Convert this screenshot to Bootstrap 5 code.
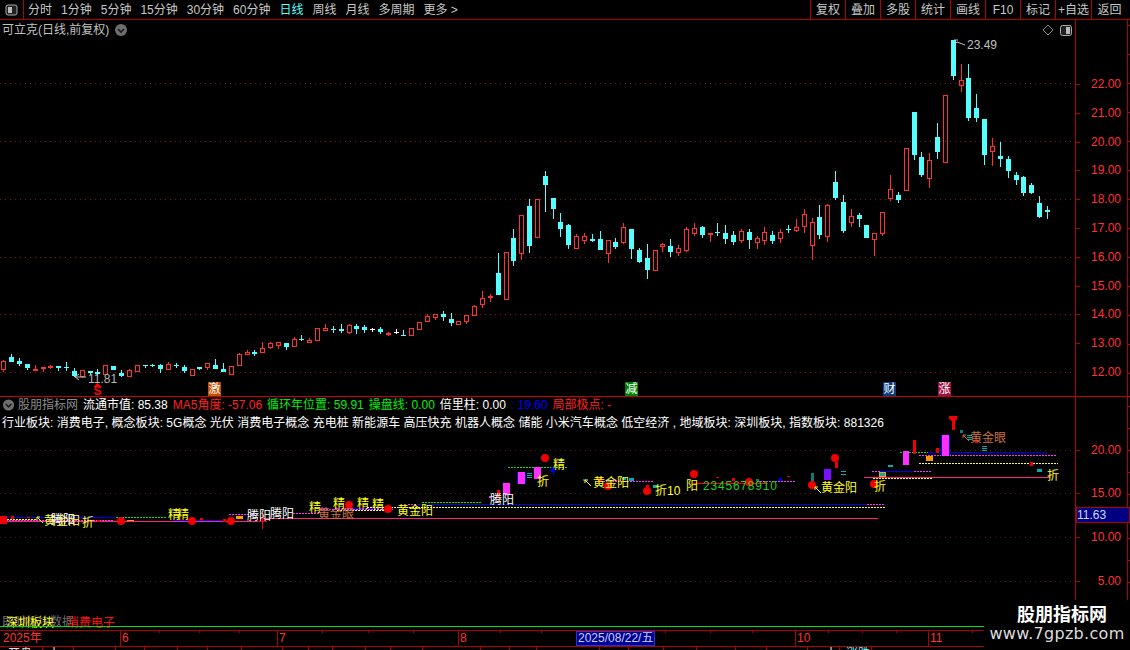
<!doctype html>
<html lang="zh-CN">
<head>
<meta charset="utf-8">
<title>可立克 K线</title>
<link href="https://cdn.jsdelivr.net/npm/bootstrap@5.3.0/dist/css/bootstrap.min.css" rel="stylesheet">
<style>
html,body{margin:0;height:100%;background:#000;overflow:hidden}
body,svg text{font-family:"Liberation Sans","Noto Sans CJK SC",sans-serif;font-size:12px}
.tv-app{width:1130px;height:650px;background:#000;color:#c8c8c8;line-height:1}
.tv-bar{height:20px;border-bottom:1px solid #b00000}
.tv-home{width:24px;height:19px;border-right:1px solid #b00000}
.tv-periods{gap:9px;padding-left:4px}
.tv-periods span.on{color:#54ffff}
.tv-tool{width:35px;height:19px;border-left:1px solid #b00000}
.tv-tool-w{width:36px}
.tv-tools{padding-right:3px}
.tv-body{height:610px}
.tv-left{width:1075px}
.tv-right{width:55px}
.tv-pane-main{height:377px;border-bottom:1px solid #c80000}
.tv-pane-sub{height:233px}
.tv-canvas{display:block}
.tv-over{position:absolute;top:0;left:0}
.tv-head{height:20px;padding-left:2px;gap:5px;color:#c0c0c0;position:relative}
.tv-head-tools{position:absolute;top:0;right:0}
.tv-sub-head{position:relative;color:#fff;height:16px;padding-left:2px;white-space:nowrap}
.tv-sub-info{position:relative;color:#fff;height:20px;padding-left:2px;white-space:nowrap;letter-spacing:.02px}
.tv-g{color:#8c8c8c;margin-left:3px;margin-right:5px}
.tv-m{margin-right:5px}
.c-r{color:#ff2020}.c-g{color:#00f000}.c-b{color:#0000ff}
.tv-time{display:block}
.tv-mark{position:absolute;right:0;bottom:0;width:146px;height:50px;background:#000;text-align:center}
.tv-mark-a{font-size:18px;font-weight:700;color:#fff;margin-top:5px;line-height:20px;padding-left:10px}
.tv-mark-b{font-family:"DejaVu Sans",sans-serif;font-size:16px;letter-spacing:.3px;color:#ddd;line-height:18px;margin-top:0;white-space:nowrap}
</style>
</head>
<body>
<div class="tv-app position-relative d-flex flex-column">
  <nav class="tv-bar d-flex align-items-center">
    <div class="tv-home d-flex align-items-center justify-content-center">
      <svg width="13" height="12" viewBox="0 0 13 12"><rect x="1" y="1" width="11" height="10" rx="2" fill="#222" stroke="#aaa"/><rect x="3" y="3" width="4" height="6" fill="#bbb"/></svg>
    </div>
    <div class="tv-periods d-flex align-items-center">
      <span>分时</span><span>1分钟</span><span>5分钟</span><span>15分钟</span><span>30分钟</span><span>60分钟</span><span class="on">日线</span><span>周线</span><span>月线</span><span>多周期</span><span>更多 &gt;</span>
    </div>
    <div class="tv-tools ms-auto d-flex">
      <div class="tv-tool d-flex align-items-center justify-content-center">复权</div>
      <div class="tv-tool d-flex align-items-center justify-content-center">叠加</div>
      <div class="tv-tool d-flex align-items-center justify-content-center">多股</div>
      <div class="tv-tool d-flex align-items-center justify-content-center">统计</div>
      <div class="tv-tool d-flex align-items-center justify-content-center">画线</div>
      <div class="tv-tool d-flex align-items-center justify-content-center">F10</div>
      <div class="tv-tool d-flex align-items-center justify-content-center">标记</div>
      <div class="tv-tool tv-tool-w d-flex align-items-center justify-content-center">+自选</div>
      <div class="tv-tool tv-tool-w d-flex align-items-center justify-content-center">返回</div>
    </div>
  </nav>
  <div class="tv-body d-flex">
    <div class="tv-left">
      <section class="tv-pane-main position-relative">
        <svg id="main" class="tv-canvas tv-over" width="1075" height="376" viewBox="0 20 1075 376" shape-rendering="crispEdges"></svg>
        <div class="tv-head d-flex align-items-center">
          <span>可立克(日线,前复权)</span>
          <svg width="14" height="14" viewBox="0 0 14 14"><circle cx="7" cy="7" r="6" fill="#6e6e6e"/><path d="M4 6l3 3 3-3" fill="none" stroke="#1a1a1a" stroke-width="1.6"/></svg>
          <div class="tv-head-tools d-flex align-items-center">
            <svg width="40" height="20" viewBox="0 0 40 20"><path d="M13 5l5 5-5 5-5-5z" fill="none" stroke="#888"/><rect x="25.5" y="5.5" width="11" height="10" rx="2" fill="#222" stroke="#aaa"/><rect x="31" y="7" width="4" height="7" fill="#bbb"/></svg>
          </div>
        </div>
      </section>
      <section class="tv-pane-sub position-relative">
        <svg id="sub" class="tv-canvas tv-over" width="1075" height="233" viewBox="0 397 1075 233" shape-rendering="crispEdges"></svg>
        <div class="tv-sub-head d-flex align-items-center">
          <svg width="13" height="14" viewBox="0 0 14 14"><circle cx="7" cy="7" r="6" fill="#6e6e6e"/><path d="M4 6l3 3 3-3" fill="none" stroke="#1a1a1a" stroke-width="1.6"/></svg>
          <span class="tv-g">股朋指标网</span>
          <span class="tv-m">流通市值: 85.38</span>
          <span class="tv-m c-r">MA5角度: -57.06</span>
          <span class="tv-m c-g">循环年位置: 59.91</span>
          <span class="tv-m c-g">操盘线: 0.00</span>
          <span class="tv-m">倍里柱: 0.00</span>
          <span class="tv-m c-b">: 19.60</span>
          <span class="c-r">局部极点: -</span>
        </div>
        <div class="tv-sub-info d-flex align-items-center">行业板块: 消费电子, 概念板块: 5G概念 光伏 消费电子概念 充电桩 新能源车 高压快充 机器人概念 储能 小米汽车概念 低空经济 , 地域板块: 深圳板块, 指数板块: 881326</div>
      </section>
    </div>
    <aside class="tv-right">
      <svg id="axis" class="tv-canvas" width="55" height="610" viewBox="1075 20 55 610" shape-rendering="crispEdges"></svg>
    </aside>
  </div>
  <svg id="time" class="tv-time" width="1130" height="20" viewBox="0 630 1130 20" shape-rendering="crispEdges"></svg>
  <div class="tv-mark">
    <div class="tv-mark-a">股朋指标网</div>
    <div class="tv-mark-b">www.7gpzb.com</div>
  </div>
</div>
<script src="https://cdn.jsdelivr.net/npm/bootstrap@5.3.0/dist/js/bootstrap.bundle.min.js"></script>
<script>
var NS='http://www.w3.org/2000/svg';
function el(p,n,a,t){var e=document.createElementNS(NS,n);for(var k in a)e.setAttribute(k,a[k]);if(t!=null)e.textContent=t;p.appendChild(e);return e}
function R(p,x,y,w,h,c){return el(p,'rect',{x:x,y:y,width:w,height:h,fill:c})}
function L(p,x1,y,x2,c,d){var a={x1:x1,y1:y+.5,x2:x2,y2:y+.5,stroke:c};if(d)a['stroke-dasharray']=d;return el(p,'line',a)}
function T(p,x,cy,s,c,o){var a={x:x,y:cy+4,fill:c,'shape-rendering':'auto'};for(var k in o||{})a[k]=o[k];return el(p,'text',a,s)}
function C(p,x,y,r,c){return el(p,'circle',{cx:x,cy:y,r:r,fill:c,'shape-rendering':'auto'})}

var RED='#ff3232',CY='#54ffff',DOT='#8c1414';
var m=document.getElementById('main');
[83,141,199,257,314,372].forEach(function(y){L(m,0,y,1075,DOT,'1 4')});
/* top,bottom,high,low,type */
var K='361,370,360,372,r|357,362,354,362,c|361,364,358,366,c|364,368,364,370,c|369,370,365,370,r|367,369,367,372,r|366,367,365,369,r|366,368,366,371,c|367,368,362,371,c|371,376,368,377,c|370,377,370,378,r|371,373,371,375,c|372,374,369,376,c|365,375,365,375,r|366,370,366,370,c|373,376,370,377,c|370,377,369,377,r|365,372,365,372,r|365,366,365,368,c|365,366,364,367,c|365,369,364,373,c|364,370,362,370,r|365,366,363,368,c|367,371,365,373,c|369,376,369,376,r|367,369,367,370,c|363,368,363,370,r|365,369,359,369,c|369,372,363,372,c|366,375,366,375,r|354,366,353,366,r|352,355,350,355,r|352,354,350,356,c|348,353,342,353,r|343,348,342,349,r|342,346,342,349,r|343,347,343,350,c|339,347,337,347,r|339,340,335,341,c|340,343,338,343,r|328,341,328,341,r|328,331,324,331,r|329,330,326,333,c|329,331,324,333,c|325,333,324,334,r|326,329,324,334,c|327,330,325,333,c|329,330,328,332,w|329,332,327,334,c|333,335,332,336,f|332,333,329,334,w|335,336,330,336,c|328,336,328,336,r|322,330,322,330,r|316,322,314,322,r|314,318,314,320,r|314,317,311,321,c|319,323,313,326,c|321,325,321,325,r|315,322,315,324,r|306,316,305,316,r|298,305,291,308,r|296,298,294,302,f|273,295,253,295,c|252,300,252,300,r|238,261,229,266,c|215,254,215,260,r|206,246,199,253,c|199,238,199,238,r|176,185,171,212,c|198,209,198,219,c|222,229,213,237,c|225,245,224,249,c|236,249,234,249,r|236,241,233,244,r|239,241,234,242,c|239,250,231,250,c|240,254,240,263,r|242,247,238,249,c|227,243,223,244,r|229,249,229,259,c|250,262,248,263,c|258,270,244,279,c|250,271,250,271,r|244,247,243,252,r|246,252,239,257,c|248,253,245,256,r|229,251,227,252,r|228,234,223,236,r|227,235,226,238,c|233,235,233,242,r|232,233,223,236,c|233,239,225,244,c|235,242,231,245,c|231,241,229,243,r|232,240,229,249,c|238,243,236,249,r|232,241,227,245,r|235,241,231,244,c|232,239,229,243,r|229,230,225,233,c|227,231,219,232,r|214,227,209,233,r|222,246,218,260,r|217,235,205,239,c|205,237,204,242,r|182,198,171,200,c|202,231,195,233,c|216,223,209,227,r|215,219,213,227,c|225,238,225,238,c|233,240,233,256,r|212,234,212,236,r|189,199,175,201,r|195,200,192,203,c|148,191,148,191,r|112,155,112,160,c|157,175,152,177,c|160,179,153,188,r|137,152,123,159,c|95,163,95,163,r|40,76,40,80,c|80,86,64,92,r|78,118,64,121,c|108,118,94,122,c|119,155,119,165,c|146,152,138,166,r|156,159,142,167,c|159,171,156,178,c|175,180,172,185,c|177,193,176,196,c|185,193,183,194,c|203,217,196,218,c|210,212,206,219,c'.split('|');
K.forEach(function(s,i){
  var p=s.split(','),t=+p[0],b=+p[1],h=+p[2],l=+p[3],k=p[4],x=Math.round(3.3+7.847*i);
  var c=k=='r'||k=='f'?RED:k=='w'?'#fff':CY;
  if(h<t)R(m,x,h,1,t-h,c);
  if(l>b)R(m,x,b,1,l-b,c);
  if(k=='r'){el(m,'rect',{x:x-1.5,y:t+.5,width:4,height:Math.max(b-t-1,1),fill:'none',stroke:RED})}
  else R(m,x-2,t,5,Math.max(b-t,1),c);
});
/* price notes */
el(m,'path',{d:'M954 40l3 3M954 40h4M957 42l8 3',fill:'none',stroke:'#c0c0c0','shape-rendering':'auto'});
T(m,967,45,'23.49','#c0c0c0');
el(m,'path',{d:'M75 377h11M75 377l4-3M75 377l4 3',fill:'none',stroke:'#c0c0c0','shape-rendering':'auto'});
T(m,88,379,'11.81','#b4b4b4');
el(m,'polygon',{points:'97,383 101,387 93,387',fill:'#ff0000'});
T(m,93.5,390.5,'S','#ff0000',{'font-size':'10px','font-weight':'700'});
[[208,'激','#c24e00'],[625,'减','#008000'],[883,'财','#0b3c7c'],[938,'涨','#a01040']].forEach(function(b){
  R(m,b[0],382,13,14,b[2]);T(m,b[0]+.5,389,b[1],'#fff');
});

/* indicator pane */
var s=document.getElementById('sub');
[450,493,537,581].forEach(function(y){L(s,0,y,1075,'#5c1a1a','1 4')});
var PK='#ff2080',BL='#0000f0',YD='#ffff40',MG='#ff30ff',GD='#10e010',TL='#00b0b0',TE='#008080',OR='#ff9a10',RD='#f00000';
[[5,517,115,BL],[116,517,167,GD,'2 1'],[3,520,113,MG,'2 1'],[7,519,37,YD,'2 1'],[173,520,222,BL],[229,514,256,MG,'2 1'],[293,513,320,MG,'2 1'],[320,509,393,MG,'2 1'],[333,508,393,BL],[337,510,390,YD,'2 1'],[408,504,427,MG,'2 1'],[422,502,481,GD,'2 1'],[417,504,490,BL],[367,507,451,YD,'2 1'],[490,504,867,BL],[867,504,885,MG,'2 1'],[451,507,885,YD,'2 1'],[0,521,260,PK],[260,518,878,PK],[508,467,567,GD,'2 1'],[600,481,653,MG,'2 1'],[757,481,795,MG,'2 1'],[693,483,768,RD],[872,471,932,MG,'2 1'],[880,471,913,BL],[873,478,932,YD,'2 1'],[864,477,1050,PK],[900,452,928,GD,'2 1'],[928,452,1047,BL],[919,455,1057,MG,'2 1'],[919,463,1058,YD,'2 1']].forEach(function(a){L(s,a[0],a[1],a[2],a[3],a[4])});
/* bars */
[[0,516,7,8,RD],[11,516,3,3,RD],[27,517,3,1,RD],[127,520,7,1,OR],[97,520,3,2,RD],[200,518,3,2,RD],[223,519,3,3,RD],[236,516,7,3,OR],[262,515,1,14,RD],[258,521,9,1,RD],
[497,490,3,7,RD],[489,496,2,2,MG],[503,483,7,12,MG],[517,472,1,12,BL],[525,472,1,12,BL],[518,472,7,12,MG],[527,473,5,1,TL],[527,475,5,1,TL],[527,477,5,1,TL],[534,467,7,12,MG],[551,467,4,5,BL],[553,472,1,3,BL],
[583,479,3,2,TE],[598,478,4,4,RD],[607,480,3,2,TE],[622,478,4,2,TL],[629,478,5,3,TL],[653,485,5,3,TL],[646,485,3,2,RD],
[716,477,3,1,RD],[732,478,3,3,RD],[756,479,3,2,TE],[779,478,3,3,BL],[787,476,3,1,RD],
[811,473,3,8,TE],[824,469,7,11,'#7a10ff'],[827,468,1,1,BL],[841,471,5,1,TL],[841,474,5,1,TL],[835,462,3,6,RD],[879,472,7,5,OR],[880,473,5,3,TL],[888,465,5,2,TL],
[903,451,6,14,MG],[913,440,3,14,RD],[926,456,7,5,OR],[936,448,3,5,RD],[941,435,1,21,BL],[949,435,1,21,BL],[942,435,7,21,MG],[967,435,5,1,TL],[967,437,5,1,TL],[967,439,5,1,TL],[982,446,5,1,TL],[982,448,5,1,TL],[982,450,5,1,TL],[960,430,3,3,TE],[975,440,3,3,RD],[1030,462,3,4,RD],[1037,469,5,3,TL],[952,421,3,9,RD]].forEach(function(a){R(s,a[0],a[1],a[2],a[3],a[4])});
el(s,'polygon',{points:'949,416 957,416 957,419 954,422 952,422 949,419',fill:RD});
[[121,521],[192,521],[231,521],[349,505],[388,509],[545,458],[608,486],[647,491],[694,474],[749,482],[812,485],[835,458],[874,484]].forEach(function(c){C(s,c[0],c[1],4,'#f00000')});
/* arrows */
[[37,517,YD],[585,480,YD],[815,487,YD],[963,435,'#c87040']].forEach(function(a){
  el(s,'path',{d:'M'+a[0]+' '+a[1]+'l6 6M'+a[0]+' '+a[1]+'h3M'+a[0]+' '+a[1]+'v3',fill:'none',stroke:a[2],'shape-rendering':'auto'});
});
var Y='#ffff20',W='#fff',BR='#c87040',GR='#20d020';
[[44,521,'黄金阳',Y],[51,520,'腾阳',W],[82,523,'折',Y],[168,515,'精',Y],[177,515,'精',Y],[247,516,'腾阳',W],[270,514,'腾阳',W],[309,508,'精',Y],[318,514,'黄金眼',BR],[333,504,'精',Y],[357,504,'精',Y],[372,505,'精',Y],[397,511,'黄金阳',Y],[490,500,'腾阳',W],[553,465,'精',Y],[537,482,'折',Y],[593,483,'黄金阳',Y],[655,491,'折10',Y],[686,486,'阳',Y],[821,488,'黄金阳',Y],[874,487,'折',Y],[970,438,'黄金眼',BR],[1047,476,'折',Y]].forEach(function(t){T(s,t[0],t[1],t[2],t[3])});
T(s,703,486,'2345678910',GR,{'letter-spacing':'.8px'});
/* bottom strip */
T(s,2,622,'即时板块数据','#6e6e6e');
T(s,6,623,'深圳板块','#ffff20');
T(s,67,623,'消费电子','#ff1010');
R(s,0,626,984,1,'#00e000');

/* right axis */
var a=document.getElementById('axis'),AL='#b00000';
R(a,1075,20,1,580,AL);R(a,1127,20,1,580,AL);
R(a,1075,396,55,1,'#c80000');
for(var y=25;y<396;y+=29)R(a,1127,y,3,1,AL);
for(var y=84;y<=372;y+=28.8){R(a,1076,Math.round(y),4,1,AL)}
['22.00','21.00','20.00','19.00','18.00','17.00','16.00','15.00','14.00','13.00','12.00'].forEach(function(v,i){T(a,1121,Math.round(84+28.8*i),v,RED,{'text-anchor':'end'})});
[['20.00',450],['15.00',493],['10.00',537],['5.00',581]].forEach(function(v){R(a,1076,v[1],4,1,AL);T(a,1121,v[1],v[0],RED,{'text-anchor':'end'})});
for(var y=406;y<600;y+=22)R(a,1127,y,3,1,AL);
el(a,'rect',{x:1076.5,y:507.5,width:53,height:15,fill:'#000080',stroke:'#b00000'});
T(a,1077,515,'11.63','#c8d8ff');

/* time axis */
var t=document.getElementById('time');
R(t,0,630,984,1,AL);R(t,0,646,984,1,AL);
[159,199,239,322,368,413,500,541,665,710,752,828,862,896,972].forEach(function(x){R(t,x,631,1,2,AL)});
[[120,'6'],[277,'7'],[458,'8'],[795,'10'],[928,'11']].forEach(function(v){R(t,v[0],630,1,16,AL);T(t,v[0]+2,638,v[1],RED)});
T(t,3,638,'2025年',RED);
el(t,'rect',{x:576.5,y:631.5,width:78,height:14,fill:'#000090',stroke:'#3030d0'});
T(t,578,638,'2025/08/22/五','#c8d0ff');
[42,73,115,144,177,207,241,282,308,332,365,390,422,480,509,536,599,628,663,696,735,766,807,839,871].forEach(function(x){R(t,x,647,1,3,AL)});
T(t,8,654,'开盘','#e0e0e0');T(t,48,654,'十','#e0e0e0');T(t,825,654,'十','#e0e0e0');T(t,846,654,'涨跌',CY);
</script>
</body>
</html>
